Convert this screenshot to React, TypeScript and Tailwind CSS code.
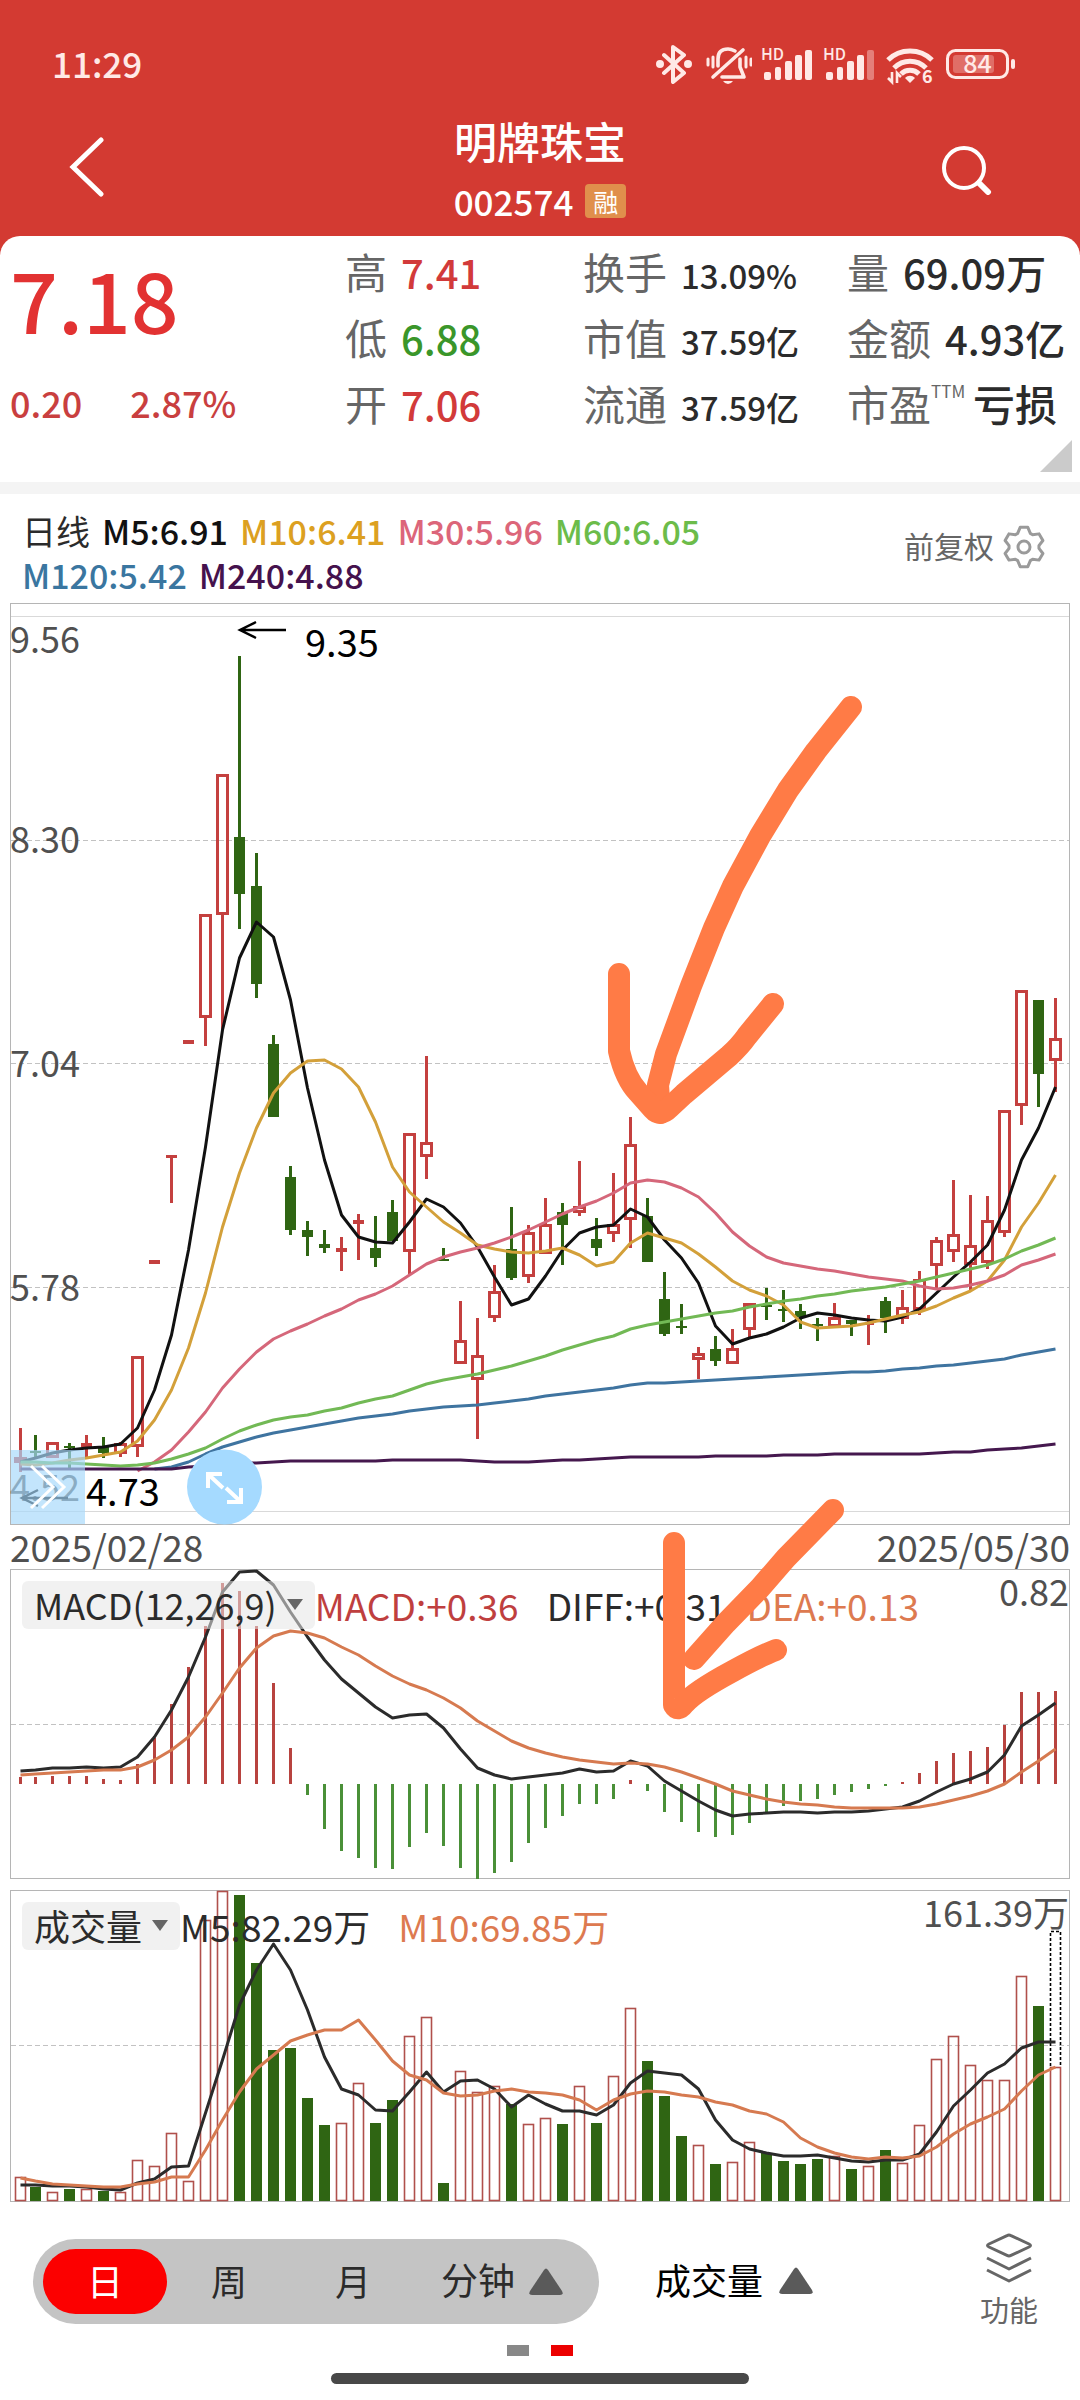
import { ReactNode } from "react";

type Candle = {
  dir: "up" | "down";
  high: number;
  top: number;
  bottom: number;
  low: number;
};

type ChartPanelProps = {
  top: number;
  height: number;
  label: string;
  children: ReactNode;
};

const FIRST_X = 18.5;
const STEP = 17;
const ZERO = 1784;
const BASE = 2201;

const RED = "#c4403f";
const GREEN = "#2f6513";

const xAt = (i: number) => (i === 0 ? 20.5 : FIRST_X + i * STEP);

// direction, high, body top, body bottom, low
const raw: [number, number, number, number, number][] = [
  [1, 1428, 1457, 1463, 1472],
  [0, 1435, 1451, 1453, 1457],
  [1, 1442, 1442, 1458, 1458],
  [0, 1443, 1446, 1448, 1468],
  [1, 1435, 1443, 1447, 1459],
  [0, 1437, 1447, 1453, 1458],
  [1, 1442, 1443, 1454, 1457],
  [1, 1356, 1356, 1447, 1457],
  [1, 1260, 1260, 1264, 1264],
  [1, 1155, 1155, 1158, 1203],
  [1, 1040, 1040, 1044, 1044],
  [1, 914, 914, 1018, 1046],
  [1, 774, 774, 915, 1030],
  [0, 656, 837, 894, 929],
  [0, 853, 886, 984, 998],
  [0, 1035, 1044, 1117, 1117],
  [0, 1166, 1177, 1230, 1235],
  [0, 1221, 1230, 1237, 1256],
  [0, 1230, 1244, 1248, 1253],
  [1, 1237, 1248, 1252, 1271],
  [1, 1214, 1220, 1224, 1260],
  [0, 1216, 1248, 1258, 1267],
  [0, 1200, 1212, 1241, 1241],
  [1, 1133, 1133, 1252, 1274],
  [1, 1056, 1142, 1157, 1179],
  [0, 1248, 1259, 1261, 1261],
  [1, 1301, 1340, 1364, 1364],
  [1, 1318, 1355, 1380, 1439],
  [1, 1265, 1291, 1318, 1322],
  [0, 1207, 1249, 1278, 1280],
  [1, 1225, 1232, 1277, 1283],
  [1, 1198, 1224, 1254, 1254],
  [0, 1203, 1212, 1225, 1265],
  [1, 1161, 1206, 1213, 1216],
  [0, 1218, 1239, 1248, 1256],
  [1, 1173, 1224, 1234, 1242],
  [1, 1117, 1144, 1220, 1248],
  [0, 1198, 1216, 1262, 1262],
  [0, 1272, 1299, 1334, 1336],
  [0, 1304, 1326, 1328, 1334],
  [1, 1347, 1353, 1360, 1379],
  [0, 1336, 1349, 1361, 1366],
  [1, 1329, 1348, 1364, 1364],
  [1, 1303, 1303, 1330, 1338],
  [0, 1288, 1305, 1307, 1320],
  [0, 1290, 1309, 1311, 1322],
  [0, 1304, 1311, 1317, 1329],
  [0, 1318, 1324, 1326, 1341],
  [1, 1303, 1317, 1327, 1327],
  [0, 1320, 1320, 1324, 1336],
  [1, 1315, 1323, 1325, 1345],
  [0, 1297, 1301, 1318, 1333],
  [1, 1290, 1307, 1319, 1324],
  [1, 1271, 1279, 1310, 1315],
  [1, 1237, 1240, 1266, 1289],
  [1, 1180, 1234, 1252, 1262],
  [1, 1195, 1245, 1265, 1291],
  [1, 1196, 1220, 1263, 1269],
  [1, 1110, 1110, 1233, 1237],
  [1, 990, 990, 1106, 1125],
  [0, 1000, 1000, 1074, 1107],
  [1, 998, 1038, 1061, 1092],
];

const candles: Candle[] = raw.map(([up, high, top, bottom, low]) => ({
  dir: up ? "up" : "down",
  high,
  top,
  bottom,
  low,
}));

const ma5 = [
  1462, 1458, 1453, 1450, 1448, 1447, 1444, 1428, 1390, 1335, 1250, 1147, 1030,
  958, 922, 937, 1000, 1088, 1160, 1215, 1237, 1242, 1243, 1222, 1199, 1207,
  1223, 1247, 1277, 1305, 1299, 1276, 1250, 1233, 1227, 1225, 1209, 1217, 1240,
  1258, 1283, 1326, 1344, 1338, 1334, 1327, 1318, 1313, 1315, 1318, 1320, 1321,
  1317, 1309, 1293, 1277, 1262, 1245, 1210, 1160, 1128, 1087,
];

const ma10 = [
  1464, 1465, 1463, 1460, 1458, 1455, 1452, 1441, 1420, 1390, 1348, 1293, 1227,
  1173, 1128, 1093, 1073, 1061, 1060, 1069, 1087, 1122, 1167, 1192, 1207, 1222,
  1233, 1245, 1249, 1252, 1253, 1251, 1248, 1255, 1266, 1262, 1243, 1233, 1238,
  1243, 1254, 1267, 1281, 1290, 1296, 1305, 1322, 1328, 1327, 1326, 1323, 1319,
  1315, 1312, 1306, 1298, 1291, 1281, 1260, 1227, 1203, 1175,
];

const ma30 = [
  1471, 1462, 1450, 1432, 1412, 1388, 1369, 1352, 1339, 1331, 1324, 1316, 1309,
  1300, 1294, 1286, 1275, 1264, 1257, 1252, 1248, 1243, 1237, 1230, 1222, 1214,
  1207, 1201, 1193, 1183, 1180, 1182, 1188, 1197, 1213, 1232, 1246, 1257, 1263,
  1266, 1269, 1271, 1274, 1277, 1279, 1281, 1286, 1289, 1288, 1285, 1281, 1275,
  1265, 1260, 1254,
];

const ma60 = [
  1462, 1462, 1463, 1463, 1464, 1465, 1466, 1465, 1463, 1459, 1454, 1448, 1439,
  1431, 1425, 1420, 1417, 1415, 1411, 1408, 1403, 1399, 1396, 1390, 1384, 1380,
  1377, 1374, 1370, 1366, 1361, 1356, 1350, 1345, 1340, 1336, 1329, 1325, 1322,
  1319, 1316, 1313, 1311, 1307, 1304, 1301, 1299, 1296, 1294, 1291, 1289, 1287,
  1284, 1281, 1277, 1273, 1269, 1265, 1259, 1251, 1245, 1238,
];

const ma120 = [
  1469, 1467, 1462, 1454, 1447, 1442, 1437, 1433, 1430, 1427, 1424, 1421, 1418,
  1416, 1414, 1411, 1409, 1407, 1406, 1405, 1403, 1401, 1399, 1396, 1394, 1392,
  1390, 1388, 1385, 1383, 1383, 1382, 1381, 1380, 1379, 1378, 1377, 1376, 1375,
  1374, 1373, 1372, 1372, 1371, 1369, 1368, 1366, 1365, 1363, 1361, 1359, 1355,
  1352, 1349,
];

const ma240 = [
  1469, 1469, 1469, 1469, 1469, 1469, 1469, 1469, 1469, 1469, 1467, 1466, 1464,
  1463, 1463, 1462, 1461, 1461, 1461, 1461, 1461, 1461, 1460, 1460, 1460, 1460,
  1460, 1461, 1462, 1462, 1462, 1461, 1460, 1460, 1459, 1458, 1457, 1457, 1457,
  1457, 1457, 1456, 1456, 1456, 1456, 1455, 1455, 1455, 1454, 1454, 1454, 1454,
  1454, 1454, 1453, 1452, 1452, 1450, 1449, 1448, 1446, 1444,
];

const macd = [
  1777, 1777, 1776, 1776, 1776, 1779, 1780, 1764, 1738, 1704, 1667, 1626, 1583,
  1591, 1626, 1683, 1748, 1795, 1829, 1851, 1858, 1868, 1869, 1847, 1833, 1846,
  1868, 1879, 1873, 1862, 1843, 1828, 1816, 1804, 1804, 1799, 1780, 1791, 1812,
  1822, 1832, 1837, 1835, 1823, 1812, 1806, 1801, 1799, 1795, 1792, 1789, 1786,
  1782, 1773, 1761, 1753, 1751, 1747, 1725, 1692, 1692, 1691,
];

const diff = [
  1771, 1770, 1768, 1768, 1767, 1768, 1767, 1757, 1737, 1710, 1677, 1637, 1592,
  1572, 1571, 1585, 1612, 1637, 1660, 1679, 1693, 1707, 1718, 1715, 1714, 1728,
  1749, 1768, 1775, 1779, 1777, 1775, 1773, 1769, 1772, 1771, 1761, 1766, 1781,
  1791, 1801, 1810, 1816, 1814, 1813, 1812, 1812, 1813, 1812, 1812, 1811, 1809,
  1807, 1801, 1792, 1784, 1779, 1772, 1755, 1726, 1715, 1703,
];

const dea = [
  1775, 1774, 1773, 1772, 1771, 1770, 1770, 1767, 1760, 1750, 1737, 1717, 1693,
  1668, 1648, 1636, 1631, 1633, 1638, 1647, 1655, 1666, 1676, 1684, 1690, 1698,
  1708, 1721, 1731, 1741, 1748, 1753, 1757, 1760, 1762, 1764, 1763, 1764, 1767,
  1772, 1778, 1784, 1791, 1795, 1799, 1802, 1804, 1805, 1807, 1808, 1808, 1808,
  1808, 1807, 1804, 1800, 1796, 1791, 1784, 1772, 1761, 1749,
];

const volume = [
  2177, 2187, 2192, 2189, 2189, 2191, 2192, 2160, 2166, 2133, 2181, 1920, 1891,
  1895, 1963, 2050, 2048, 2098, 2125, 2123, 2083, 2123, 2100, 2036, 2017, 2183,
  2071, 2092, 2086, 2104, 2124, 2118, 2124, 2086, 2123, 2076, 2008, 2061, 2096,
  2136, 2145, 2164, 2162, 2142, 2153, 2161, 2164, 2159, 2156, 2169, 2166, 2150,
  2163, 2125, 2059, 2036, 2065, 2080, 2080, 1976, 2006, 2067,
];

const vol5 = [
  2185, 2185, 2186, 2186, 2187, 2189, 2190, 2183, 2179, 2167, 2166, 2113, 2060,
  2005, 1970, 1944, 1970, 2010, 2057, 2089, 2095, 2110, 2111, 2092, 2072, 2092,
  2081, 2080, 2089, 2107, 2095, 2104, 2111, 2111, 2115, 2105, 2083, 2071, 2073,
  2075, 2089, 2120, 2140, 2149, 2153, 2156, 2156, 2155, 2158, 2161, 2162, 2160,
  2160, 2154, 2132, 2106, 2090, 2073, 2064, 2048, 2042, 2042,
];

const vol10 = [
  2178, 2181, 2184, 2185, 2186, 2187, 2187, 2184, 2182, 2177, 2177, 2150, 2120,
  2092, 2069, 2055, 2041, 2035, 2030, 2030, 2020, 2040, 2061, 2075, 2080, 2093,
  2096, 2095, 2091, 2089, 2092, 2093, 2095, 2100, 2110, 2100, 2094, 2091, 2092,
  2095, 2097, 2102, 2105, 2111, 2114, 2122, 2138, 2147, 2153, 2157, 2159, 2157,
  2158, 2156, 2147, 2134, 2124, 2117, 2109, 2091, 2075, 2067,
];

const Line = ({
  data,
  color,
  from = 0,
}: {
  data: number[];
  color: string;
  from?: number;
}) => (
  <polyline
    points={data.map((y, i) => `${xAt(i + from)},${y}`).join(" ")}
    fill="none"
    stroke={color}
    strokeWidth="3"
    strokeLinejoin="round"
  />
);

const CandleShape = ({ candle, x }: { candle: Candle; x: number }) => {
  const { dir, high, top, bottom, low } = candle;
  const color = dir === "up" ? RED : GREEN;
  const hollow = dir === "up" && bottom - top > 5;
  return (
    <g>
      <path
        d={`M${x} ${high}V${top}M${x} ${bottom}V${low}`}
        stroke={color}
        strokeWidth="3"
      />
      {hollow ? (
        <rect
          x={x - 5}
          y={top + 1.5}
          width="10"
          height={bottom - top - 3}
          fill="none"
          stroke={color}
          strokeWidth="3"
        />
      ) : (
        <rect
          x={x - 5.5}
          y={top}
          width="11"
          height={bottom - top}
          fill={color}
        />
      )}
    </g>
  );
};

const GridLine = ({ y }: { y: number }) => (
  <path d={`M11 ${y}H1069`} stroke="#c2c2c2" strokeDasharray="5 3" />
);

const AxisText = ({
  x,
  y,
  end,
  children,
}: {
  x: number;
  y: number;
  end?: boolean;
  children: ReactNode;
}) => (
  <text
    x={x}
    y={y}
    fontSize="36"
    fill="#505050"
    textAnchor={end ? "end" : "start"}
  >
    {children}
  </text>
);

const ChartPanel = ({ top, height, label, children }: ChartPanelProps) => (
  <svg
    className="block h-auto w-full overflow-visible"
    viewBox={`10 ${top} 1060 ${height}`}
    role="img"
    aria-label={label}
  >
    <rect
      x="10.5"
      y={top + 0.5}
      width="1059"
      height={height - 1}
      fill="none"
      stroke="#b5b5b5"
    />
    {children}
  </svg>
);

const SignalIcon = ({ weak }: { weak?: boolean }) => (
  <svg
    className="h-9 w-[52px] overflow-visible"
    viewBox="0 0 52 36"
    fill="currentColor"
  >
    <text x="-1" y="14" fontSize="16" fontWeight="500">
      HD
    </text>
    <rect x="2" y="26" width="7" height="8" rx="2" />
    <rect x="13" y="21" width="6" height="13" rx="2" />
    <rect x="23" y="15" width="7" height="19" rx="2" />
    <rect x="33" y="9" width="7" height="25" rx="2" />
    <rect
      x="43"
      y="4"
      width="7"
      height="30"
      rx="2"
      opacity={weak ? 0.4 : 1}
    />
  </svg>
);

const StatusBar = () => (
  <div className="flex h-[118px] items-center justify-between pt-2.5 pr-16 pl-[52px] text-[#ffe9e6]">
    <span className="pb-1 text-[35px] leading-none font-medium">11:29</span>
    <div className="flex items-center gap-2.5">
      <svg
        className="mr-1 h-10 w-9"
        viewBox="0 0 36 40"
        fill="none"
        stroke="currentColor"
        strokeWidth="4"
        strokeLinejoin="round"
        strokeLinecap="round"
      >
        <path d="M8 11l20 18-11 9V3l11 8L8 29" />
        <circle cx="4" cy="20" r="2" fill="currentColor" />
        <circle cx="32" cy="20" r="2" fill="currentColor" />
      </svg>
      <svg
        className="h-[42px] w-[46px]"
        viewBox="0 0 46 42"
        fill="none"
        stroke="currentColor"
        strokeWidth="3.6"
        strokeLinecap="round"
        strokeLinejoin="round"
      >
        <path d="M12 23V16C12 9 16 6 22 6c3 0 5 1 7 2M34 16v8l4 10H16M37 7L7 34" />
        <path d="M2 16v6M7 14v10M40 14v10M45 16v6" strokeWidth="3" />
        <path d="M17 38h10q-2 3-5 3t-5-3z" fill="currentColor" stroke="none" />
      </svg>
      <SignalIcon />
      <SignalIcon weak />
      <svg
        className="h-[42px] w-12 overflow-visible"
        viewBox="0 0 48 42"
        fill="none"
      >
        <g stroke="currentColor" strokeWidth="5">
          <path d="M2 17c12-12 32-12 44 0" />
          <path d="M8 25c9-9 23-9 32 0" />
          <path d="M15 31c5-5 13-5 18 0" />
        </g>
        <path d="M19 35c3-3 7-3 10 0l-5 5z" fill="currentColor" />
        <path
          d="M6 29v10l-4-4M11 40V30l4 4"
          stroke="currentColor"
          strokeWidth="2.6"
        />
        <text x="36" y="40" fontSize="18" fontWeight="700" fill="currentColor">
          6
        </text>
      </svg>
      <svg
        className="h-8 w-[72px] overflow-visible"
        viewBox="0 0 72 32"
        fill="none"
      >
        <rect
          x="3.5"
          y="2.5"
          width="60"
          height="27"
          rx="8"
          stroke="currentColor"
          strokeWidth="3"
        />
        <rect
          x="9"
          y="7"
          width="41"
          height="18"
          rx="3"
          fill="currentColor"
          opacity="0.3"
        />
        <rect x="67" y="11" width="4" height="10" rx="2" fill="currentColor" />
        <text
          x="33.5"
          y="25"
          fontSize="25"
          fontWeight="500"
          textAnchor="middle"
          fill="currentColor"
        >
          84
        </text>
      </svg>
    </div>
  </div>
);

const TitleBar = () => (
  <div className="grid h-[118px] grid-cols-[1fr_auto_1fr] text-white">
    <button className="h-[98px] pl-[68px]" aria-label="返回">
      <svg
        className="h-[60px] w-9"
        viewBox="0 0 36 60"
        fill="none"
        stroke="currentColor"
        strokeWidth="5"
        strokeLinecap="round"
      >
        <path d="M33 3L5 30l28 27" />
      </svg>
    </button>
    <div className="flex flex-col items-center gap-3">
      <h1 className="text-[43px] leading-[44px] font-medium">明牌珠宝</h1>
      <div className="flex items-center gap-3">
        <span className="text-[35px] leading-[54px] font-medium">002574</span>
        <span className="rounded bg-[#e08f4c] px-2 text-[25px] leading-[34px]">
          融
        </span>
      </div>
    </div>
    <button
      className="flex h-[104px] items-center justify-end pr-[88px]"
      aria-label="搜索"
    >
      <svg
        className="h-[50px] w-[50px]"
        viewBox="0 0 50 50"
        fill="none"
        stroke="currentColor"
        strokeLinecap="round"
      >
        <circle cx="22" cy="23" r="20" strokeWidth="4" />
        <path d="M37 38l9 9" strokeWidth="6" />
      </svg>
    </button>
  </div>
);

const Stat = ({
  name,
  sup,
  value,
}: {
  name: string;
  sup?: string;
  value: ReactNode;
}) => (
  <div className="flex h-[66px] items-baseline gap-3.5 whitespace-nowrap">
    <dt className="relative text-[42px] leading-[66px] text-[#666]">
      {name}
      {sup && (
        <sup className="absolute top-3 left-full text-[17px] leading-none">
          {sup}
        </sup>
      )}
    </dt>
    {value}
  </div>
);

const Quote = () => (
  <section className="relative rounded-t-[20px] bg-white">
    <div className="grid h-[246px] grid-cols-[335fr_238fr_264fr_233fr] pt-0.5 pl-2.5">
      <div className="text-[#e23232]">
        <p className="pt-3 text-[84px] leading-[96px] font-medium">7.18</p>
        <p className="flex gap-12 pt-8 text-[36px] leading-[48px] font-medium text-[#c93f3f]">
          <span>0.20</span>
          <span>2.87%</span>
        </p>
      </div>
      <dl>
        <Stat
          name="高"
          value={
            <dd className="text-[40px] font-medium text-[#d23a3a]">7.41</dd>
          }
        />
        <Stat
          name="低"
          value={
            <dd className="text-[40px] font-medium text-[#3a962a]">6.88</dd>
          }
        />
        <Stat
          name="开"
          value={
            <dd className="text-[40px] font-medium text-[#d23a3a]">7.06</dd>
          }
        />
      </dl>
      <dl className="text-[#2b2b2b]">
        <Stat
          name="换手"
          value={<dd className="text-[33px] font-medium">13.09%</dd>}
        />
        <Stat
          name="市值"
          value={<dd className="text-[33px] font-medium">37.59亿</dd>}
        />
        <Stat
          name="流通"
          value={<dd className="text-[33px] font-medium">37.59亿</dd>}
        />
      </dl>
      <dl className="text-[#2b2b2b]">
        <Stat
          name="量"
          value={<dd className="text-[40px] font-medium">69.09万</dd>}
        />
        <Stat
          name="金额"
          value={<dd className="text-[40px] font-medium">4.93亿</dd>}
        />
        <Stat
          name="市盈"
          sup="TTM"
          value={<dd className="pl-7 text-[42px] font-medium">亏损</dd>}
        />
      </dl>
    </div>
    <svg
      className="absolute right-2 bottom-2.5 h-8 w-8"
      viewBox="0 0 32 32"
      fill="#cbcbcb"
    >
      <path d="M32 0v32H0z" />
    </svg>
  </section>
);

const gearPoints = [0, 1, 2, 3, 4, 5]
  .flatMap((n) =>
    [
      [-25, 15],
      [-11, 20],
      [11, 20],
      [25, 15],
    ].map(([offset, radius]) => {
      const a = ((n * 60 - 90 + offset) * Math.PI) / 180;
      return `${22 + radius * Math.cos(a)},${22 + radius * Math.sin(a)}`;
    }),
  )
  .join(" ");

const Legend = () => (
  <div className="flex h-[109px] items-start justify-between bg-white pt-[15px] pr-[34px] pl-[22px]">
    <ul className="flex flex-1 flex-wrap gap-x-3 text-[34px] leading-[44px] font-medium">
      <li className="font-normal text-[#2b2b2b]">日线</li>
      <li className="text-[#111]">M5:6.91</li>
      <li className="text-[#dca021]">M10:6.41</li>
      <li className="text-[#dc667a]">M30:5.96</li>
      <li className="text-[#6cbc4a]">M60:6.05</li>
      <li className="basis-full" />
      <li className="text-[#3a76a0]">M120:5.42</li>
      <li className="text-[#45124d]">M240:4.88</li>
    </ul>
    <button className="flex h-[76px] items-center gap-2 text-[30px] leading-none text-[#666]">
      <span className="pb-1">前复权</span>
      <svg
        className="h-11 w-11"
        viewBox="0 0 44 44"
        fill="none"
        stroke="#9a9a9a"
        strokeWidth="3"
        strokeLinejoin="round"
      >
        <polygon points={gearPoints} />
        <circle cx="22" cy="22" r="6" />
      </svg>
    </button>
  </div>
);

const PriceChart = () => (
  <ChartPanel top={603} height={922} label="日线">
    <path d="M11 616.5H1069M11 1511.5H1069" stroke="#d9d9d9" />
    <GridLine y={840.5} />
    <GridLine y={1063.5} />
    <GridLine y={1287.5} />
    <AxisText x={10} y={653}>
      9.56
    </AxisText>
    <AxisText x={10} y={853}>
      8.30
    </AxisText>
    <AxisText x={10} y={1077}>
      7.04
    </AxisText>
    <AxisText x={10} y={1301}>
      5.78
    </AxisText>
    <AxisText x={10} y={1501}>
      4.52
    </AxisText>
    {candles.map((candle, i) => (
      <CandleShape key={i} candle={candle} x={xAt(i)} />
    ))}
    <Line data={ma5} color="#111111" />
    <Line data={ma10} color="#d3a03a" />
    <Line data={ma30} from={7} color="#d5677a" />
    <Line data={ma60} color="#72b955" />
    <Line data={ma120} from={8} color="#3f74a0" />
    <Line data={ma240} color="#45184e" />
    <g fill="none" stroke="#000" strokeWidth="2.5">
      <path d="M286 630H240M256 622l-16 8 16 8" />
      <path d="M68 1498H22M38 1490l-16 8 16 8" />
    </g>
    <text x="305" y="657" fontSize="38">
      9.35
    </text>
    <text x="86" y="1506" fontSize="38">
      4.73
    </text>
    <rect
      x="11"
      y="1450"
      width="74"
      height="74"
      fill="#a6d9fb"
      opacity="0.68"
    />
    <g fill="none" stroke="#fff" strokeWidth="3">
      <path d="M31 1466l22 21-22 21M42 1466l22 21-22 21" />
    </g>
    <circle cx="224.5" cy="1487" r="37.5" fill="#a5daff" />
    <g fill="none" stroke="#fff" strokeWidth="4">
      <path d="M207 1500v0M208 1488v-14h14M209 1475l14 13" />
      <path d="M241 1488v14h-14M240 1501l-14-13" />
    </g>
  </ChartPanel>
);

const MacdChart = () => (
  <ChartPanel top={1569} height={310} label="MACD">
    <GridLine y={1724.5} />
    {macd.map((y, i) => (
      <path
        key={i}
        d={`M${xAt(i)} ${ZERO}V${y}`}
        stroke={y < ZERO ? "#b8433f" : "#4a9038"}
        strokeWidth="3"
      />
    ))}
    <Line data={diff} color="#2b2b2b" />
    <Line data={dea} color="#d67a50" />
    <AxisText x={1069} y={1606} end>
      0.82
    </AxisText>
  </ChartPanel>
);

const VolumeChart = () => (
  <ChartPanel top={1890} height={312} label="成交量">
    <GridLine y={2045.5} />
    {volume.map((y, i) =>
      candles[i].dir === "up" ? (
        <rect
          key={i}
          x={xAt(i) - 5}
          y={y + 0.5}
          width="10"
          height={BASE - y - 1}
          fill="none"
          stroke="#b0504c"
          strokeWidth="1.6"
        />
      ) : (
        <rect
          key={i}
          x={xAt(i) - 5.5}
          y={y}
          width="11"
          height={BASE - y}
          fill={GREEN}
        />
      ),
    )}
    <path
      d="M1050.5 2066V1931.5h10V2066"
      fill="none"
      stroke="#000"
      strokeWidth="1.6"
      strokeDasharray="3 2"
    />
    <Line data={vol5} color="#2b2b2b" />
    <Line data={vol10} color="#d67a50" />
    <AxisText x={1069} y={1927} end>
      161.39万
    </AxisText>
  </ChartPanel>
);

const IndicatorButton = ({ children }: { children: ReactNode }) => (
  <button className="flex h-12 items-center gap-2.5 rounded-md bg-[#e6e6e6]/55 px-3 text-[36px] text-[#2b2b2b]">
    <span className="pb-0.5">{children}</span>
    <svg className="h-3 w-4" viewBox="0 0 16 12" fill="#666">
      <path d="M0 0h16L8 11z" />
    </svg>
  </button>
);

// hand drawn arrows that run across the price and MACD panels
const Arrows = () => (
  <svg
    className="pointer-events-none absolute inset-x-2.5 top-0"
    viewBox="10 603 1060 1599"
    fill="none"
    stroke="#ff7b46"
    strokeWidth="22"
    strokeLinecap="round"
    strokeLinejoin="round"
  >
    <path d="M851 707L816 751L788 790L760 836L733 886L714 928L691 986L666 1054L658 1085L660 1113" />
    <path d="M619 974V1051Q625 1078 638 1092L653 1109Q660 1117 669 1108L684 1094L729 1056Q740 1046 747 1036L773 1004" />
    <path d="M833 1510L786 1558L760 1588L726 1623L694 1659" />
    <path d="M674 1543V1705Q678 1712 684 1704Q694 1692 733 1671Q760 1656 776 1650" />
  </svg>
);

const Charts = () => (
  <section className="relative bg-white px-2.5">
    <PriceChart />
    <div className="flex h-11 items-center justify-between pb-0.5 text-[37px] leading-none text-[#505050]">
      <time>2025/02/28</time>
      <time>2025/05/30</time>
    </div>
    <div className="relative">
      <MacdChart />
      <div className="absolute top-3 left-3 flex items-center text-[37px] leading-none whitespace-nowrap">
        <IndicatorButton>MACD(12,26,9)</IndicatorButton>
        <span className="text-[#bf3f3f]">MACD:+0.36</span>
        <span className="ml-7 text-[#2b2b2b]">DIFF:+0.31</span>
        <span className="ml-5 text-[#dd7a50]">DEA:+0.13</span>
      </div>
    </div>
    <div className="relative mt-[11px]">
      <VolumeChart />
      <div className="absolute top-3 left-3 flex items-center text-[37px] leading-none whitespace-nowrap">
        <IndicatorButton>成交量</IndicatorButton>
        <span className="text-[#2b2b2b]">M5:82.29万</span>
        <span className="ml-7 text-[#dd7a50]">M10:69.85万</span>
      </div>
    </div>
    <Arrows />
  </section>
);

const UpTriangle = () => (
  <svg className="mt-1 h-7 w-[34px]" viewBox="0 0 34 28" fill="#5a5a5a">
    <path d="M15 2q2-3 4 0l14 21q2 4-2 4H3q-4 0-2-4z" />
  </svg>
);

const BottomBar = () => (
  <footer className="bg-white">
    <div className="flex items-center pt-[31px] pr-[42px] pl-[33px] text-[36px] leading-none text-[#2b2b2b]">
      <div className="mt-1.5 flex h-[85px] items-center rounded-full bg-[#c4c4c4] pr-9 pl-2.5">
        <button className="h-[65px] w-[124px] rounded-full bg-[#fc0000] pb-1 text-white">
          日
        </button>
        <button className="h-[65px] w-[124px] pb-1">周</button>
        <button className="h-[65px] w-[124px] pb-1">月</button>
        <button className="flex h-[65px] items-center gap-3.5 pb-1 pl-[26px] text-[37px]">
          分钟
          <UpTriangle />
        </button>
      </div>
      <button className="ml-14 flex items-center gap-4 text-black">
        成交量
        <UpTriangle />
      </button>
      <button className="ml-auto flex flex-col items-center gap-3 text-[29px] text-[#666]">
        <svg
          className="h-[50px] w-12"
          viewBox="0 0 48 50"
          fill="none"
          stroke="#666"
          strokeWidth="3"
          strokeLinejoin="round"
        >
          <path d="M22 2.6q2-1 4 0l18 8.400q3 1.500 0 3L26 22.400q-2 1-4 0L4 14q-3-1.500 0-3z" />
          <path d="M2 25l22 11 22-11M2 37l22 11 22-11" />
        </svg>
        功能
      </button>
    </div>
    <div className="flex justify-center gap-[22px] pt-[21px]">
      <span className="h-[11px] w-[22px] bg-[#888]" />
      <span className="h-[11px] w-[22px] bg-[#ec0000]" />
    </div>
    <div className="flex justify-center pt-[17px] pb-4">
      <span className="h-[11px] w-[418px] rounded-full bg-[#484848]" />
    </div>
  </footer>
);

const App = () => {
  return (
    <main className="w-full bg-white font-['Noto_Sans_CJK_SC','Noto_Sans',sans-serif]">
      <div className="bg-[#d33a32]">
        <header>
          <StatusBar />
          <TitleBar />
        </header>
        <Quote />
      </div>
      <div className="h-3 bg-[#f4f4f4]" />
      <Legend />
      <Charts />
      <BottomBar />
    </main>
  );
};

export default App;
